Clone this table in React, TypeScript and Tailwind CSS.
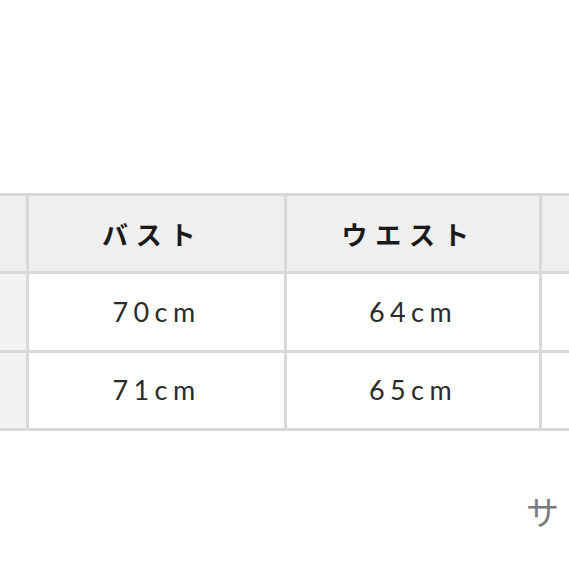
import React from "react";

const headers = ["", "バスト", "ウエスト", ""];

const rows = [
  ["", "70cm", "64cm", ""],
  ["", "71cm", "65cm", ""],
];

export default function App() {
  return (
    <div
      className="w-[569px] h-[569px] overflow-hidden bg-white"
      style={{ fontFamily: '"Noto Sans CJK JP", "Noto Sans", sans-serif' }}
    >
      <div className="pt-[193px]">
        <div className="ml-[-227px] w-max grid grid-cols-[250px_255px_252px_250px] grid-rows-[75px_76px_75px] gap-[3px] p-[3px] bg-[#d9d9d9]">
          {headers.map((h, i) => (
            <div
              key={i}
              className="bg-[#efefef] flex items-center justify-center text-[26px] font-bold tracking-[0.3em] text-[#1a1a1a]"
            >
              <span className="mr-[0.3em]">{h}</span>
            </div>
          ))}
          {rows.map((r, ri) =>
            r.map((c, i) => (
              <div
                key={ri + "-" + i}
                className={`${i === 0 ? "bg-[#f2f2f2]" : "bg-white"} flex items-center justify-center text-[27px] tracking-[0.2em] text-[#2b2b2b]`}
                style={{ fontFamily: 'Lato, "Noto Sans CJK JP", sans-serif' }}
              >
                {c}
              </div>
            ))
          )}
        </div>
        <div className="mt-[64px] pl-[526px] whitespace-nowrap text-[33px] tracking-[0.3em] leading-none text-[#7a7a7a]">
          サイズ表
        </div>
      </div>
    </div>
  );
}
